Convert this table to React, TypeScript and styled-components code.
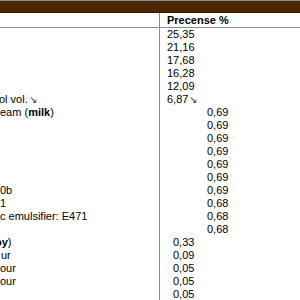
import React from "react";
import styled, { createGlobalStyle } from "styled-components";

const Global = createGlobalStyle`
  html, body { margin: 0; padding: 0; background: #fff; overflow: hidden; }
  body { font-family: "Liberation Sans", Arial, sans-serif; font-size: 11px; color: #000; }
`;

const Page = styled.div`
  width: 300px;
  height: 300px;
  overflow: hidden;
  background: #fff;
`;

const Banner = styled.div`
  height: 11px;
  background: #4a2700;
  border-top: 1px solid #8a8a8a;
  border-bottom: 1px solid #2e1800;
`;

const Grid = styled.div`
  display: grid;
  grid-template-columns: 159px 1fr;
`;

const LeftCell = styled.div<{ $head?: boolean }>`
  height: 13px;
  line-height: 13px;
  white-space: nowrap;
  overflow: hidden;
  ${(p) => (p.$head ? "height: 14px; border-bottom: 1px solid #8c8c8c;" : "")}
`;

const RightCell = styled.div<{ $head?: boolean }>`
  height: 13px;
  line-height: 13px;
  border-left: 1px solid #8c8c8c;
  padding-left: 7px;
  white-space: nowrap;
  ${(p) =>
    p.$head
      ? "height: 14px; line-height: 14px; border-bottom: 1px solid #8c8c8c; font-weight: bold; padding-top: 0;"
      : ""}
`;

const Frag = styled.span<{ $shift: number }>`
  display: inline-block;
  margin-left: ${(p) => p.$shift}px;
`;

const Value = styled.span<{ $indent: number }>`
  display: inline-block;
  margin-left: ${(p) => p.$indent}px;
`;

const Arrow = styled.span`
  font-size: 10px;
  margin-left: 1px;
  color: #333;
`;

type Row = { left?: React.ReactNode; shift?: number; value: string; indent: number; arrow?: boolean };

const rows: Row[] = [
  { value: "25,35", indent: 0 },
  { value: "21,16", indent: 0 },
  { value: "17,68", indent: 0 },
  { value: "16,28", indent: 0 },
  { value: "12,09", indent: 0 },
  { left: <>ol vol.<Arrow>↘</Arrow></>, shift: -1, value: "6,87", indent: 0, arrow: true },
  { left: <>eam (<b>milk</b>)</>, shift: 0, value: "0,69", indent: 40 },
  { value: "0,69", indent: 40 },
  { value: "0,69", indent: 40 },
  { value: "0,69", indent: 40 },
  { value: "0,69", indent: 40 },
  { value: "0,69", indent: 40 },
  { left: <>0b</>, shift: 0, value: "0,69", indent: 40 },
  { left: <>1</>, shift: 0, value: "0,68", indent: 40 },
  { left: <>c emulsifier: E471</>, shift: 0, value: "0,68", indent: 40 },
  { value: "0,68", indent: 40 },
  { left: <><b>oy</b>)</>, shift: -5, value: "0,33", indent: 6 },
  { left: <>ur</>, shift: 1, value: "0,09", indent: 6 },
  { left: <>our</>, shift: 0, value: "0,05", indent: 6 },
  { left: <>our</>, shift: 0, value: "0,05", indent: 6 },
  { value: "0,05", indent: 6 },
];

export default function App() {
  return (
    <Page>
      <Global />
      <Banner />
      <Grid>
        <LeftCell $head />
        <RightCell $head>Precense %</RightCell>
        {rows.map((r, i) => (
          <React.Fragment key={i}>
            <LeftCell>{r.left ? <Frag $shift={r.shift ?? 0}>{r.left}</Frag> : null}</LeftCell>
            <RightCell>
              <Value $indent={r.indent}>
                {r.value}
                {r.arrow ? <Arrow>↘</Arrow> : null}
              </Value>
            </RightCell>
          </React.Fragment>
        ))}
      </Grid>
    </Page>
  );
}
